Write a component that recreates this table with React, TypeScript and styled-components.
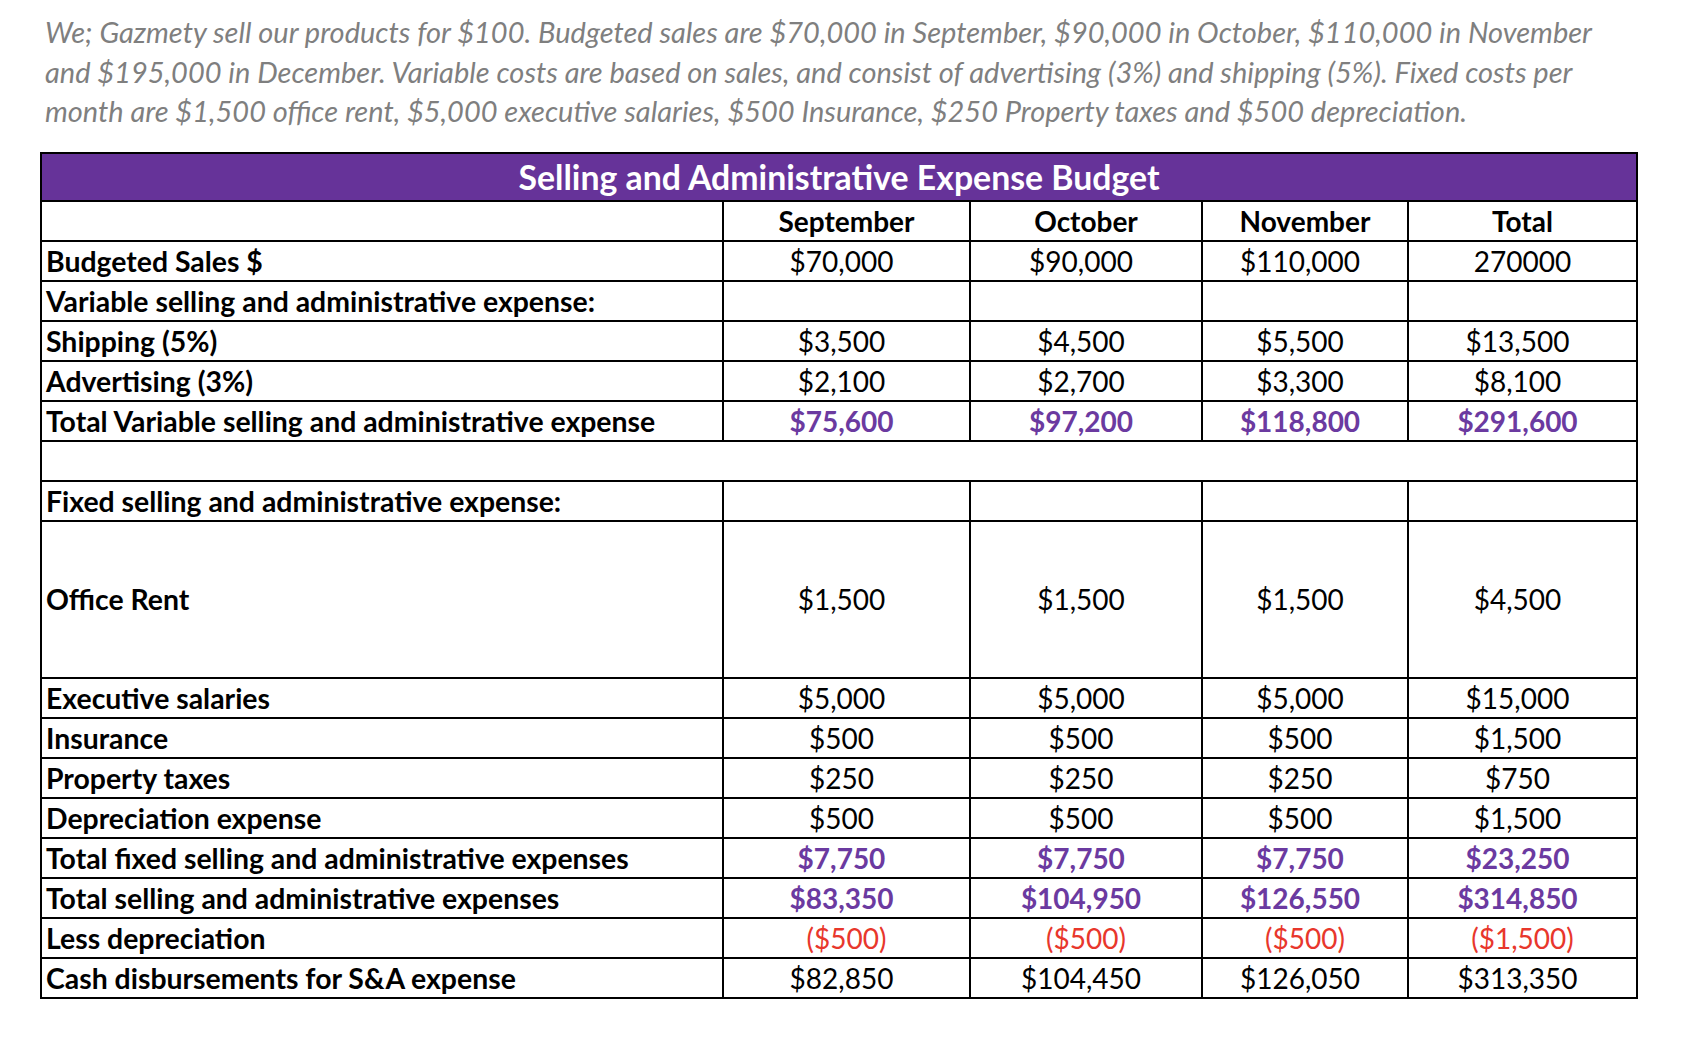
import styled, { createGlobalStyle } from "styled-components";

const GlobalStyle = createGlobalStyle`
    body {
        margin: 0;
        background: #fff;
        font-family: Lato, "Open Sans", sans-serif;
    }
`

const Page = styled.div`
    padding: 12px 0 40px 40px;
    width: 1598px;
`

const Intro = styled.p`
    margin: 0 0 21px 0;
    padding-left: 5px;
    font-style: italic;
    font-size: 29px;
    line-height: 39.6px;
    color: #7f7f7f;
    white-space: nowrap;
`

const Sheet = styled.div`
    display: grid;
    grid-template-columns: 680px 245px 230px 204px 227px;
    gap: 2px;
    padding: 2px;
    background: #000;
`

const Title = styled.div`
    grid-column: 1 / -1;
    height: 46px;
    background: #663399;
    color: #fff;
    font-weight: 700;
    font-size: 33.8px;
    display: flex;
    align-items: center;
    justify-content: center;
`

const Cell = styled.div<{ $tall?: boolean; $span?: boolean }>`
    background: #fff;
    display: flex;
    align-items: center;
    font-size: 28px;
    color: #000;
    white-space: nowrap;
    height: ${p => (p.$tall ? "155px" : "38px")};
    grid-column: ${p => (p.$span ? "1 / -1" : "auto")};
`

const Label = styled(Cell)`
    font-weight: 700;
    font-size: 28.4px;
    padding-left: 4px;
`

const Month = styled(Cell)`
    font-weight: 700;
    justify-content: center;
`

type Kind = "plain" | "total" | "negative" | "raw";

const Value = styled(Cell)<{ $kind: Kind }>`
    justify-content: center;
    font-weight: ${p => (p.$kind === "total" ? 700 : 400)};
    color: ${p => (p.$kind === "total" ? "#6b3aa0" : p.$kind === "negative" ? "#e8372c" : "#000")};
    padding-right: ${p => (p.$kind === "plain" || p.$kind === "total" ? "10px" : "0")};
`

type Row = {
    label?: string;
    values?: string[];
    kind?: Kind;
    tall?: boolean;
    blank?: boolean;
};

const rows: Row[] = [
    { label: "Budgeted Sales $", values: ["$70,000", "$90,000", "$110,000"], kind: "plain" },
    { label: "Variable selling and administrative expense:", values: ["", "", "", ""] },
    { label: "Shipping (5%)", values: ["$3,500", "$4,500", "$5,500", "$13,500"], kind: "plain" },
    { label: "Advertising (3%)", values: ["$2,100", "$2,700", "$3,300", "$8,100"], kind: "plain" },
    { label: "Total Variable selling and administrative expense", values: ["$75,600", "$97,200", "$118,800", "$291,600"], kind: "total" },
    { blank: true },
    { label: "Fixed selling and administrative expense:", values: ["", "", "", ""] },
    { label: "Office Rent", values: ["$1,500", "$1,500", "$1,500", "$4,500"], kind: "plain", tall: true },
    { label: "Executive salaries", values: ["$5,000", "$5,000", "$5,000", "$15,000"], kind: "plain" },
    { label: "Insurance", values: ["$500", "$500", "$500", "$1,500"], kind: "plain" },
    { label: "Property taxes", values: ["$250", "$250", "$250", "$750"], kind: "plain" },
    { label: "Depreciation expense", values: ["$500", "$500", "$500", "$1,500"], kind: "plain" },
    { label: "Total fixed selling and administrative expenses", values: ["$7,750", "$7,750", "$7,750", "$23,250"], kind: "total" },
    { label: "Total selling and administrative expenses", values: ["$83,350", "$104,950", "$126,550", "$314,850"], kind: "total" },
    { label: "Less depreciation", values: ["($500)", "($500)", "($500)", "($1,500)"], kind: "negative" },
    { label: "Cash disbursements for S&A expense", values: ["$82,850", "$104,450", "$126,050", "$313,350"], kind: "plain" },
];

const months = ["September", "October", "November", "Total"];

const App = () => {
    return (
        <Page>
            <GlobalStyle />
            <Intro>
                We; Gazmety sell our products for $100. Budgeted sales are $70,000 in September, $90,000 in October, $110,000 in November
                <br />
                and $195,000 in December. Variable costs are based on sales, and consist of advertising (3%) and shipping (5%). Fixed costs per
                <br />
                month are $1,500 office rent, $5,000 executive salaries, $500 Insurance, $250 Property taxes and $500 depreciation.
            </Intro>
            <Sheet>
                <Title>Selling and Administrative Expense Budget</Title>
                <Cell />
                {months.map(m => (
                    <Month key={m}>{m}</Month>
                ))}
                {rows.map((row, i) => {
                    if (row.blank) return <Cell key={i} $span />;
                    return [
                        <Label key={`l${i}`} $tall={row.tall}>{row.label}</Label>,
                        ...(row.values || []).map((v, j) => (
                            <Value key={`v${i}-${j}`} $tall={row.tall} $kind={row.kind || "plain"}>{v}</Value>
                        )),
                        // first row's total is a plain number, not currency
                        ...(i === 0 ? [<Value key="raw" $kind="raw">270000</Value>] : []),
                    ];
                })}
            </Sheet>
        </Page>
    )
}

export default App;
